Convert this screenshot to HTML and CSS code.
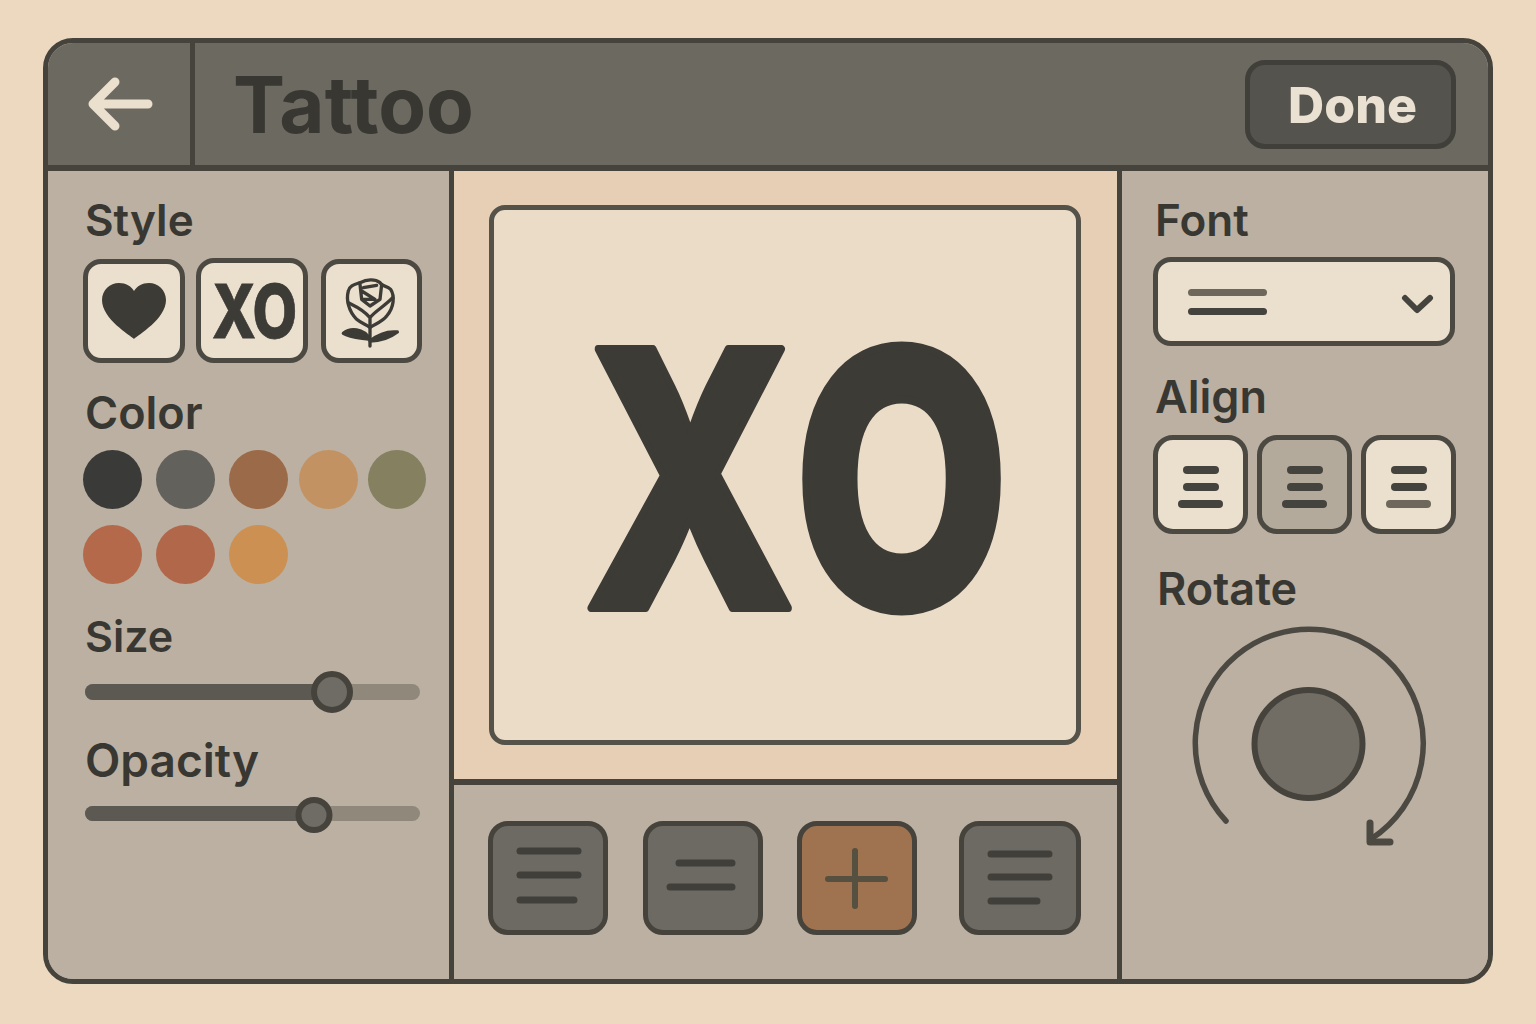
FILE: index.html
```html
<!DOCTYPE html>
<html lang="en">
<head>
  <meta charset="UTF-8">
  <title>Tattoo</title>
  <link rel="stylesheet" href="styles.css">
</head>
<body>
  <div class="app">
    <!-- Top bar -->
    <header class="topbar">
      <div class="back">
        <svg width="70" height="60" viewBox="0 0 70 60">
          <path d="M9 30H63M30 8L8 30L30 52" />
        </svg>
      </div>
      <div class="title-row">
        <h1 class="title">Tattoo</h1>
        <div class="done">Done</div>
      </div>
    </header>

    <div class="workspace">
      <!-- Left panel -->
      <aside class="panel-left">
        <p class="label label-style">Style</p>
        <div class="style-row">
          <div class="style-btn style-heart">
            <svg width="64" height="56" viewBox="0 0 64 56">
              <path d="M32 56C28 52 0 36 0 17C0 7 8 0 17 0C24 0 29 3 32 8C35 3 40 0 47 0C56 0 64 7 64 17C64 36 36 52 32 56Z" />
            </svg>
          </div>
          <div class="style-btn style-xo"><span class="xo-small">XO</span></div>
          <div class="style-btn style-rose">
            <svg width="91" height="94" viewBox="18 24 273 282">
              <path d="M85 105C78 130 85 165 110 190C125 203 140 205 150 215C160 205 185 200 200 180C222 155 225 120 212 100C200 88 185 92 180 80C165 68 140 70 120 80C105 85 88 88 85 105Z" />
              <path d="M85 140C105 150 130 160 150 185C165 165 195 150 218 125M150 185V270" />
              <path d="M120 85L125 130L150 150L180 130L185 85M125 105L165 130L130 130M130 95L170 88" />
              <path class="leaf" d="M70 232C90 215 130 215 150 250C120 245 90 245 70 232ZM150 255C175 235 205 225 232 228C210 245 180 255 150 255Z" />
            </svg>
          </div>
        </div>

        <p class="label label-color">Color</p>
        <div class="swatches">
          <span class="swatch sw-ink"></span>
          <span class="swatch sw-grey"></span>
          <span class="swatch sw-brown"></span>
          <span class="swatch sw-tan"></span>
          <span class="swatch sw-olive"></span>
          <span class="swatch sw-rust"></span>
          <span class="swatch sw-clay"></span>
          <span class="swatch sw-amber"></span>
        </div>

        <p class="label label-size">Size</p>
        <div class="slider slider-size">
          <div class="slider-fill" style="width: 73.7%"></div>
          <div class="slider-thumb" style="left: 73.7%"></div>
        </div>

        <p class="label label-opacity">Opacity</p>
        <div class="slider slider-opacity">
          <div class="slider-fill" style="width: 68.4%"></div>
          <div class="slider-thumb" style="left: 68.4%"></div>
        </div>
      </aside>

      <!-- Canvas and tool row -->
      <main class="center">
        <section class="stage">
          <div class="paper">
            <svg class="xo-big" width="582" height="530" viewBox="494 210 582 530">
              <text transform="translate(584 608) scale(.78 1)" letter-spacing="20">XO</text>
            </svg>
          </div>
        </section>
        <section class="tools">
          <div class="tool tool-one">
            <svg width="110" height="104" viewBox="493 826 110 104">
              <path d="M520 851H578M520 875H578M520 900H574" />
            </svg>
          </div>
          <div class="tool tool-two">
            <svg width="110" height="104" viewBox="648 826 110 104">
              <path d="M679 863H732M670 887H732" />
            </svg>
          </div>
          <div class="tool tool-add">
            <svg width="110" height="104" viewBox="802 826 110 104">
              <path d="M855 851V906M828 879H885" />
            </svg>
          </div>
          <div class="tool tool-four">
            <svg width="112" height="104" viewBox="964 826 112 104">
              <path d="M991 854H1049M991 877H1049M991 901H1037" />
            </svg>
          </div>
        </section>
      </main>

      <!-- Right panel -->
      <aside class="panel-right">
        <p class="label label-font">Font</p>
        <div class="select">
          <div class="select-lines">
            <span class="line-light"></span>
            <span class="line-dark"></span>
          </div>
          <svg class="chevron" width="34" height="24" viewBox="0 0 34 24">
            <path d="M5 6L17 18L30 6" />
          </svg>
        </div>

        <p class="label label-align">Align</p>
        <div class="align-row">
          <div class="align-btn">
            <span class="bar bar-s"></span>
            <span class="bar bar-s"></span>
            <span class="bar bar-l"></span>
          </div>
          <div class="align-btn align-active">
            <span class="bar bar-s"></span>
            <span class="bar bar-s"></span>
            <span class="bar bar-l"></span>
          </div>
          <div class="align-btn">
            <span class="bar bar-s"></span>
            <span class="bar bar-s"></span>
            <span class="bar bar-l bar-soft"></span>
          </div>
        </div>

        <p class="label label-rotate">Rotate</p>
        <div class="dial">
          <svg width="240" height="230" viewBox="1188 622 240 230">
            <path class="dial-ring" d="M1227 822A114 114 0 1 1 1372 840" />
            <path class="dial-arrow" d="M1371 824V843H1391" />
            <circle class="dial-knob" cx="1309.5" cy="745" r="54" />
          </svg>
        </div>
      </aside>
    </div>
  </div>
</body>
</html>
```

FILE: styles.css
```css
* {
  box-sizing: border-box;
}

html, body {
  height: 100%;
}

body {
  margin: 0;
  padding: 38px 43px 40px;
  background: #ecd9bf;
  font-family: Inter, "Liberation Sans", sans-serif;
  color: #383732;
  overflow: hidden;
}

.app {
  display: flex;
  flex-direction: column;
  width: 1450px;
  height: 946px;
  border: 5px solid #45433c;
  border-radius: 30px;
  overflow: hidden;
  background: #bbb0a1;
}

/* Top bar */
.topbar {
  display: grid;
  grid-template-columns: 147px 1fr;
  height: 128px;
  flex: none;
  background: #6c6961;
  border-bottom: 6px solid #45433c;
}

.back {
  display: flex;
  align-items: center;
  justify-content: center;
  border-right: 5px solid #45433c;
  padding-left: 2px;
}

.back svg path {
  fill: none;
  stroke: #ebdfce;
  stroke-width: 9;
  stroke-linecap: round;
  stroke-linejoin: round;
}

.title-row {
  display: flex;
  align-items: center;
  justify-content: space-between;
  padding: 0 32px 0 38px;
}

.title {
  margin: 0;
  padding-top: 2px;
  font-size: 78px;
  font-weight: 700;
  line-height: 1;
  color: #383732;
}

.done {
  display: flex;
  align-items: center;
  justify-content: center;
  width: 211px;
  height: 89px;
  padding: 2px 0 0 4px;
  background: #55534d;
  border: 5px solid #403f3a;
  border-radius: 20px;
  color: #ebe1d2;
  font-size: 50px;
  font-weight: 800;
}

.workspace {
  flex: 1;
  display: grid;
  grid-template-columns: 406px 1fr 371px;
  min-height: 0;
}

.label {
  margin: 0;
  font-size: 45px;
  font-weight: 600;
  line-height: 50px;
  color: #383732;
}

/* Left panel */
.panel-left {
  padding: 24px 0 0 35px;
  border-right: 5px solid #45433c;
  background: #bbb0a1;
}

.label-style {
  padding-left: 2px;
  font-size: 44px;
}

.style-row {
  display: flex;
  gap: 11px;
  margin-top: 13px;
  align-items: center;
}

.style-btn {
  display: flex;
  align-items: center;
  justify-content: center;
  height: 104px;
  background: #ebdfce;
  border: 5px solid #4b4942;
  border-radius: 18px;
}

.style-heart {
  width: 102px;
}

.style-heart path {
  fill: #3c3b36;
}

.style-xo {
  width: 112px;
  height: 105px;
}

.xo-small {
  display: block;
  margin-left: 5px;
  font-size: 74px;
  font-weight: 800;
  line-height: 1;
  color: #3c3b36;
  -webkit-text-stroke: .8px #3c3b36;
  transform: scaleX(.78);
}

.style-rose {
  width: 101px;
  margin-left: 2px;
}

.style-rose path {
  fill: none;
  stroke: #3c3b36;
  stroke-width: 10;
  stroke-linecap: round;
  stroke-linejoin: round;
}

.style-rose .leaf {
  fill: #3c3b36;
}

.label-color {
  margin-top: 25px;
  padding-left: 2px;
}

.swatches {
  display: grid;
  grid-template-columns: 73px 73px 70px 69px 58px;
  grid-auto-rows: 75px;
  margin-top: 12px;
  height: 135px;
}

.swatch {
  width: 59px;
  height: 59px;
  border-radius: 50%;
}

.sw-ink { background: #3a3b38; }
.sw-grey { background: #62615b; }
.sw-brown { background: #9b6a48; }
.sw-tan { background: #c39263; }
.sw-olive { width: 58px; background: #85805f; }
.sw-rust { background: #b5694b; }
.sw-clay { background: #b1674a; }
.sw-amber { background: #cc9052; }

.label-size {
  margin-top: 26px;
  padding-left: 2px;
  font-size: 43px;
}

.slider {
  position: relative;
  width: 335px;
  margin-left: 2px;
  background: #8f887b;
  border-radius: 8px;
}

.slider-fill {
  height: 100%;
  background: #5b5952;
  border-radius: 8px;
}

.slider-thumb {
  position: absolute;
  top: 50%;
  background: #6f6c65;
  border: 6px solid #45433c;
  border-radius: 50%;
  transform: translate(-50%, -50%);
}

.slider-size {
  height: 16px;
  margin-top: 23px;
}

.slider-size .slider-thumb {
  width: 42px;
  height: 42px;
}

.slider-opacity {
  height: 15px;
  margin-top: 21px;
}

.slider-opacity .slider-thumb {
  width: 37px;
  height: 36px;
  margin-top: 1px;
}

.label-opacity {
  margin-top: 35px;
  padding-left: 2px;
  font-size: 46px;
}

/* Center */
.center {
  display: flex;
  flex-direction: column;
  min-width: 0;
}

.stage {
  display: flex;
  height: 614px;
  padding: 34px 36px 34px 35px;
  background: #e6cfb4;
  border-bottom: 6px solid #45433c;
}

.paper {
  flex: 1;
  display: flex;
  align-items: center;
  justify-content: center;
  background: #ebdcc8;
  border: 5px solid #55524a;
  border-radius: 16px;
}

.xo-big text {
  font-size: 356px;
  font-weight: 800;
  fill: #3c3b36;
  stroke: #3c3b36;
  stroke-width: 8;
  stroke-linejoin: round;
}

.tools {
  flex: 1;
  display: flex;
  align-items: flex-start;
  padding: 36px 36px 0 34px;
  background: #bbb0a1;
}

.tool {
  display: flex;
  width: 120px;
  height: 114px;
  background: #6d6a63;
  border: 5px solid #45433c;
  border-radius: 20px;
}

.tool svg path {
  fill: none;
  stroke: #403f3a;
  stroke-width: 7;
  stroke-linecap: round;
}

.tool-two {
  margin-left: 35px;
}

.tool-add {
  margin-left: 34px;
  background: #a07350;
}

.tool-add svg path {
  stroke: #55503f;
  stroke-width: 6;
}

.tool-four {
  width: 122px;
  margin-left: 42px;
}

/* Right panel */
.panel-right {
  padding: 24px 0 0 31px;
  border-left: 5px solid #45433c;
  background: #bbb0a1;
}

.label-font {
  padding-left: 2px;
  font-size: 44px;
}

.select {
  display: flex;
  align-items: center;
  justify-content: space-between;
  width: 302px;
  height: 89px;
  margin-top: 12px;
  padding: 0 16px 0 30px;
  background: #ebdfce;
  border: 5px solid #4b4942;
  border-radius: 18px;
}

.select-lines {
  display: flex;
  flex-direction: column;
  gap: 12px;
  width: 79px;
}

.line-light,
.line-dark {
  height: 7px;
  border-radius: 4px;
}

.line-light { background: #6d675c; }
.line-dark { background: #45433d; }

.chevron {
  margin-top: 4px;
}

.chevron path {
  fill: none;
  stroke: #45433d;
  stroke-width: 6;
  stroke-linecap: round;
  stroke-linejoin: round;
}

.label-align {
  margin-top: 26px;
  padding-left: 2px;
}

.align-row {
  display: flex;
  gap: 9px;
  margin-top: 13px;
}

.align-btn {
  display: flex;
  flex-direction: column;
  align-items: center;
  justify-content: center;
  gap: 9px;
  width: 95px;
  height: 99px;
  padding-top: 4px;
  background: #ebdfce;
  border: 5px solid #4b4942;
  border-radius: 20px;
}

.align-active {
  background: #b4aa9c;
}

.bar {
  display: block;
  height: 8px;
  background: #45433d;
  border-radius: 4px;
}

.bar-s { width: 36px; }
.bar-l { width: 45px; }
.bar-soft { background: #6d675c; }

.label-rotate {
  margin-top: 30px;
  padding-left: 4px;
}

.dial {
  margin-top: 7px;
  margin-left: 34px;
}

.dial-ring,
.dial-arrow {
  fill: none;
  stroke: #4b4942;
  stroke-width: 5.5;
  stroke-linecap: round;
  stroke-linejoin: round;
}

.dial-arrow {
  stroke-width: 7;
}

.dial-knob {
  fill: #716d65;
  stroke: #45433c;
  stroke-width: 6;
}
```
